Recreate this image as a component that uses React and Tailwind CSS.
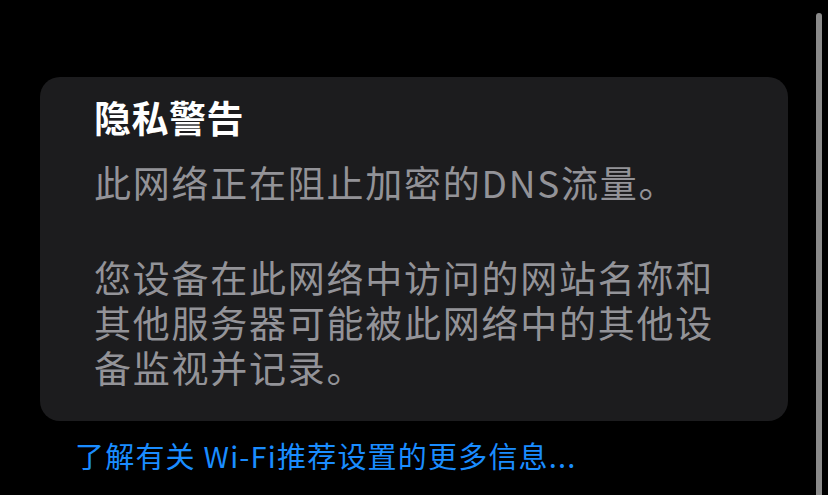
export default function App() {
  return (
    <div
      className="relative w-[828px] h-[495px] bg-black overflow-hidden"
      style={{ fontFamily: '"Noto Sans CJK SC", "Noto Sans", sans-serif' }}
    >
      <div className="absolute left-[816px] top-[13px] w-[6px] h-[500px] rounded-full bg-[#8a8a8a]" />
      <div className="pt-[77px] pl-[40px]">
        <div className="w-[748px] h-[344px] rounded-[20px] bg-[#1c1c1e] pl-[54px] pt-[18px]">
          <div className="text-white font-bold text-[37px] leading-[45px] tracking-[0.5px]">隐私警告</div>
          <div className="mt-[20px] text-[#939398] text-[37px] leading-[45px] tracking-[1.75px]">
            此网络正在阻止加密的DNS流量。
          </div>
          <div className="mt-[50px] text-[#939398] text-[37px] leading-[45px] tracking-[1.75px]">
            <div>您设备在此网络中访问的网站名称和</div>
            <div>其他服务器可能被此网络中的其他设</div>
            <div>备监视并记录。</div>
          </div>
        </div>
        <div className="mt-[17px] ml-[35px] text-[#1a8cff] text-[29px] leading-[34px] tracking-[1.2px]">
          了解有关 Wi-Fi推荐设置的更多信息...
        </div>
      </div>
    </div>
  );
}
